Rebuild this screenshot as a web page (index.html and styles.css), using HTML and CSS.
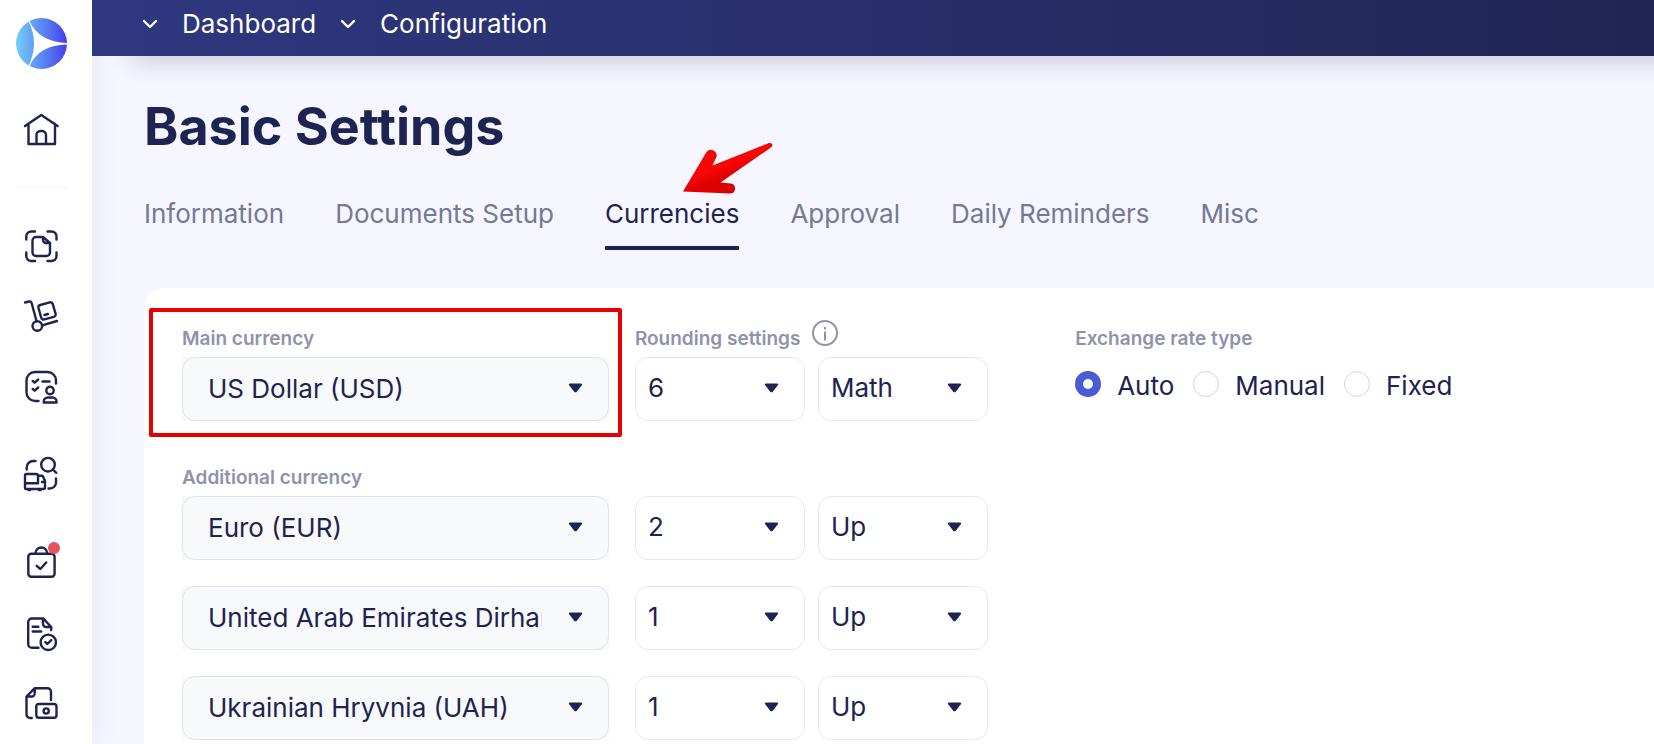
FILE: index.html
```html
<!DOCTYPE html>
<html lang="en">
<head>
    <meta charset="UTF-8">
    <meta name="viewport" content="width=device-width, initial-scale=1.0">
    <title>Basic Settings</title>
    <link rel="stylesheet" href="styles.css">
</head>
<body>
    <div class="app">
        <nav class="sidebar" aria-label="Main menu">
            <a href="#" class="logo" aria-label="Home page">
                <svg width="52" height="52" viewBox="0 0 52 52">
                    <defs>
                        <linearGradient id="logoFill" x1="0" y1="0" x2="1" y2="0">
                            <stop offset="0" stop-color="#77cdfa"/>
                            <stop offset="0.5" stop-color="#5b8af3"/>
                            <stop offset="1" stop-color="#453fea"/>
                        </linearGradient>
                    </defs>
                    <circle cx="26.5" cy="26.5" r="25.5" fill="url(#logoFill)"/>
                    <path d="M13 3L14.5 4Q24 25 52 26V27.500Q24 28 14.500 49L13 50Q25 26.500 13 3Z" fill="#fff"/>
                </svg>
            </a>
            <a href="#" class="nav-icon nav-home" aria-label="Home">
                <svg viewBox="0 0 36 36"><path d="M2 14L18.300 3 34.600 14M5.500 12V32H32V12M13.500 32V23a4 4 0 0 1 4-4h1.500a4 4 0 0 1 4 4v9"/></svg>
            </a>
            <div class="nav-group">
                <a href="#" class="nav-icon" aria-label="Documents">
                    <svg viewBox="0 0 36 36"><path d="M3.300 11.500V8.500a5 5 0 0 1 5-5H12M24.500 3.500h4a5 5 0 0 1 5 5v3M33.500 24.500v3.500a5 5 0 0 1-5 5h-4M12 33H8.300a5 5 0 0 1-5-5v-3.500"/><path d="M20 9h-7a3.500 3.500 0 0 0-3.500 3.500v12A3.500 3.500 0 0 0 13 28h10.500a3.500 3.500 0 0 0 3.500-3.500v-9.500zM20 9v3a3 3 0 0 0 3 3h4"/></svg>
                </a>
                <a href="#" class="nav-icon" aria-label="Supply">
                    <svg viewBox="0 0 36 36"><path d="M2 4.500l4-1q2-.5 2.600 1.500L13.500 23"/><circle cx="14.300" cy="28" r="4.800"/><path d="M19.300 27.300L34 23M17.300 7l9.400-2.600a2.500 2.500 0 0 1 3.100 1.800l2.800 9.600a2.500 2.500 0 0 1-1.800 3.100l-9.500 2.500a2.500 2.500 0 0 1-3.100-1.800L15.500 10a2.500 2.500 0 0 1 1.800-3zM21.500 17l3.500-1"/></svg>
                </a>
                <a href="#" class="nav-icon" aria-label="Approvals">
                    <svg viewBox="0 0 36 36"><path d="M15.500 33H12a8.500 8.500 0 0 1-8.500-8.500V12.500A8.500 8.500 0 0 1 12 4h12.500a8.500 8.500 0 0 1 8.500 8.500v3M9.700 13l2 1.700 3.500-3.200M9.700 21l2 1.700 3.500-3.200M19.500 13.500h7"/><circle cx="27" cy="22.500" r="3.700"/><path d="M20.800 34.500h12.700v-1a4 4 0 0 0-4-4h-4.700a4 4 0 0 0-4 4z"/></svg>
                </a>
            </div>
            <div class="nav-group">
                <a href="#" class="nav-icon" aria-label="Tracking">
                    <svg viewBox="0 0 36 36"><path d="M3.700 13.500v-2a6.500 6.500 0 0 1 6.500-6.500h2.300M33 22.500v4a6 6 0 0 1-6 6h-1.500"/><circle cx="25" cy="8.700" r="6.800"/><path d="M29.800 13.500l3.500 3.300"/><path d="M3.500 18H13a2 2 0 0 1 2 2v7.300H2V19.500A1.500 1.500 0 0 1 3.500 18zM2 27.300V32a1 1 0 0 0 1 1h17.500a1.500 1.500 0 0 0 1.500-1.500V25l-2-4.500a1.500 1.500 0 0 0-1.400-.8H15M19 26h2.500M5.500 34h1.500M16 34h1.500"/></svg>
                </a>
            </div>
            <div class="nav-group">
                <a href="#" class="nav-icon" aria-label="Orders">
                    <svg viewBox="0 0 36 36"><rect x="5.300" y="9.700" width="26.300" height="23" rx="3"/><path d="M12.500 9.500c.5-8 11.200-8 11.700 0M13.700 21.800l3.700 3.200 5.800-6.500"/></svg>
                    <span class="dot"></span>
                </a>
                <a href="#" class="nav-icon" aria-label="Contracts">
                    <svg viewBox="0 0 36 36"><path d="M15.500 33.700H9a3.800 3.800 0 0 1-3.800-3.800V8.300A3.800 3.800 0 0 1 9 4.500h11.300l7.900 8.500v3M20 4.500V10a3 3 0 0 0 3 3h5.200M9.700 12.700h5.600M9.700 17.500h8.500"/><circle cx="25.300" cy="28.300" r="7.700"/><path d="M22.300 28l2 2 4-3.800"/></svg>
                </a>
                <a href="#" class="nav-icon" aria-label="Payments">
                    <svg viewBox="0 0 36 36"><path d="M8.800 34H7a3.500 3.500 0 0 1-3.500-3.500V12.500l8-8.200H24.500a3.500 3.500 0 0 1 3.500 3.500V16M11.700 4.500v5a3 3 0 0 1-3 3H3.700"/><rect x="13.300" y="20" width="20.200" height="13.700" rx="2.500"/><circle cx="23.200" cy="27" r="2.600"/></svg>
                </a>
            </div>
        </nav>

        <div class="page">
            <header class="topbar">
                <svg class="chevron" viewBox="0 0 16 10"><path d="M2 2l6 6 6-6"/></svg>
                <a href="#">Dashboard</a>
                <svg class="chevron" viewBox="0 0 16 10"><path d="M2 2l6 6 6-6"/></svg>
                <a href="#">Configuration</a>
            </header>

            <main class="content">
                <h1>Basic Settings</h1>

                <nav class="tabs" aria-label="Settings sections">
                    <a href="#">Information</a>
                    <a href="#">Documents Setup</a>
                    <a href="#" class="active">Currencies
                        <svg class="arrow" width="92" height="52" viewBox="0 0 92 52" aria-hidden="true">
                            <defs>
                                <linearGradient id="arrowFill" x1="0.350" y1="0.350" x2="0.600" y2="0.700">
                                    <stop offset="0.300" stop-color="#fa0505"/>
                                    <stop offset="0.800" stop-color="#dc0000"/>
                                </linearGradient>
                            </defs>
                            <path d="M1 49.500L24.500 10Q27 6.500 31 8.200Q35.500 10.500 34.500 15L30.500 23.500L87 1Q90.500 .5 90.500 3.500L89 5.500L38.500 40.500L49 41.500Q53.500 42.500 53 47Q52.500 51.500 48 51.500Z" fill="url(#arrowFill)"/>
                        </svg>
                    </a>
                    <a href="#">Approval</a>
                    <a href="#">Daily Reminders</a>
                    <a href="#">Misc</a>
                </nav>

                <form class="card">
                    <div class="row">
                        <div class="field highlight">
                            <label for="mainCurrency">Main currency</label>
                            <div class="select-box">
                                <select id="mainCurrency"><option>US Dollar (USD)</option></select>
                            </div>
                        </div>
                        <div class="field">
                            <div class="label-line">
                                <label for="mainDigits">Rounding settings</label>
                                <svg class="info" viewBox="0 0 26 26"><circle cx="13" cy="13" r="12"/><path d="M13 11.500v9M13 7v2.500"/></svg>
                            </div>
                            <div class="pair">
                                <select id="mainDigits"><option>6</option></select>
                                <select aria-label="Rounding method"><option>Math</option></select>
                            </div>
                        </div>
                        <fieldset class="rate">
                            <legend>Exchange rate type</legend>
                            <div class="radios">
                                <label><input type="radio" name="rate" checked>Auto</label>
                                <label><input type="radio" name="rate">Manual</label>
                                <label><input type="radio" name="rate">Fixed</label>
                            </div>
                        </fieldset>
                    </div>

                    <div class="additional">
                        <div class="row">
                            <div class="field">
                                <label for="currency1">Additional currency</label>
                                <div class="select-box">
                                    <select id="currency1"><option>Euro (EUR)</option></select>
                                </div>
                            </div>
                            <div class="pair">
                                <select aria-label="Euro digits"><option>2</option></select>
                                <select aria-label="Euro rounding method"><option>Up</option></select>
                            </div>
                        </div>
                        <div class="row">
                            <div class="select-box">
                                <select aria-label="Second additional currency"><option>United Arab Emirates Dirham (AED)</option></select>
                            </div>
                            <div class="pair">
                                <select aria-label="Dirham digits"><option>1</option></select>
                                <select aria-label="Dirham rounding method"><option>Up</option></select>
                            </div>
                        </div>
                        <div class="row">
                            <div class="select-box">
                                <select aria-label="Third additional currency"><option>Ukrainian Hryvnia (UAH)</option></select>
                            </div>
                            <div class="pair">
                                <select aria-label="Hryvnia digits"><option>1</option></select>
                                <select aria-label="Hryvnia rounding method"><option>Up</option></select>
                            </div>
                        </div>
                    </div>
                </form>
            </main>
        </div>
    </div>
</body>
</html>
```

FILE: styles.css
```css
* {
    box-sizing: border-box;
}
body {
    margin: 0;
    background: #f5f6ff;
    color: #1e2351;
    font-family: Inter, "Liberation Sans", sans-serif;
    font-size: 26px;
    line-height: 32px;
}
a {
    color: inherit;
    text-decoration: none;
}
.app {
    display: flex;
    min-height: 100vh;
}

/* sidebar */
.sidebar {
    flex: 0 0 92px;
    display: flex;
    flex-direction: column;
    align-items: center;
    padding: 17px 10px 0 0;
    background: #fff;
    box-shadow: 0 0 32px rgba(30, 35, 40, 0.07);
}
.logo {
    display: block;
    height: 52px;
}
.nav-icon {
    display: block;
    position: relative;
    width: 36px;
    height: 36px;
}
.nav-icon svg {
    display: block;
    width: 36px;
    height: 36px;
    overflow: visible;
    fill: none;
    stroke: #1e2351;
    stroke-width: 2.4;
    stroke-linecap: round;
    stroke-linejoin: round;
}
.nav-home {
    width: 52px;
    height: 76px;
    margin: 43px 0 40px;
    padding: 0 8px;
    border-bottom: 1px solid #f3f3f6;
}
.nav-group {
    display: flex;
    flex-direction: column;
    gap: 34px;
    margin-bottom: 52px;
}
.nav-group:last-child {
    margin-bottom: 0;
}
.dot {
    position: absolute;
    top: -2px;
    right: -1px;
    width: 12px;
    height: 12px;
    border-radius: 50%;
    background: #e5545e;
}

/* header */
.page {
    flex: 1;
    min-width: 0;
    display: flex;
    flex-direction: column;
    overflow-x: clip;
}
.topbar {
    position: relative;
    display: flex;
    align-items: center;
    gap: 24px;
    height: 56px;
    padding: 0 50px 8px;
    background: linear-gradient(90deg, #2f387f, #212555);
    color: #fff;
}
.topbar::after {
    content: "";
    position: absolute;
    left: 40px;
    right: -40px;
    bottom: 0;
    height: 20px;
    box-shadow: 0 4px 24px rgba(30, 35, 60, 0.24);
    z-index: -1;
}
.chevron {
    width: 16px;
    height: 10px;
    fill: none;
    stroke: #fff;
    stroke-width: 2.4;
    stroke-linecap: round;
    stroke-linejoin: round;
}

/* content */
.content {
    flex: 1;
    display: flex;
    flex-direction: column;
    padding: 39px 0 0 52px;
}
h1 {
    margin: 0 0 39px;
    font-size: 52px;
    line-height: 64px;
    font-weight: 700;
}
.tabs {
    display: flex;
    gap: 51px;
    margin-bottom: 38px;
    color: #747994;
}
.tabs a {
    position: relative;
    padding-bottom: 16px;
    border-bottom: 4px solid transparent;
    white-space: nowrap;
}
.tabs .active {
    color: #1e2351;
    border-color: #1e2351;
}
.arrow {
    position: absolute;
    left: 77px;
    bottom: 52px;
}

/* settings card */
.card {
    flex: 1;
    padding: 39px 0 0 38px;
    border-radius: 20px 0 0 0;
    background: #fff;
}
.row {
    display: grid;
    grid-template-columns: 29% 24% 1fr;
    gap: 26px;
    align-items: end;
}
.field {
    position: relative;
    display: flex;
    flex-direction: column;
    gap: 6px;
    min-width: 0;
}
.field label,
.rate legend {
    color: #8f92ac;
    font-size: 19px;
    line-height: 24px;
    font-weight: 600;
}
.highlight::after {
    content: "";
    position: absolute;
    inset: -19px -13px -16px -33px;
    border: 4px solid #e60000;
    border-radius: 2px;
    pointer-events: none;
}
.label-line {
    display: flex;
    align-items: center;
    gap: 12px;
    height: 24px;
}
.info {
    width: 26px;
    height: 26px;
    margin-bottom: 12px;
    fill: none;
    stroke: #8f92ac;
    stroke-width: 2;
}
select {
    appearance: none;
    display: block;
    width: 100%;
    min-width: 0;
    height: 64px;
    padding: 0 26px 2px 12px;
    border: 1px solid #e8e8ec;
    border-radius: 13px;
    background: url("data:image/svg+xml,%3Csvg xmlns='http://www.w3.org/2000/svg' width='15' height='10'%3E%3Cpath d='M2 .5H13Q15 .5 13.800 2.300L8.800 8.700Q7.500 10 6.200 8.700L1.200 2.300Q0 .5 2 .5Z' fill='%231e2351'/%3E%3C/svg%3E") no-repeat right 25px top 25px;
    color: inherit;
    font: inherit;
}
.select-box {
    background: #f8f9fb;
}
.select-box select {
    padding: 0 66px 0 25px;
    border-color: #e1e2e9;
}
.pair {
    display: grid;
    grid-template-columns: 1fr 1fr;
    gap: 13px;
}
.rate {
    align-self: start;
    min-width: 0;
    margin: 0 0 0 61px;
    padding: 0;
    border: 0;
}
.rate legend {
    padding: 0;
}
.radios {
    display: flex;
    gap: 19px;
    padding-top: 19px;
}
.radios label {
    display: flex;
    align-items: center;
    gap: 16px;
}
.radios input {
    appearance: none;
    width: 26px;
    height: 26px;
    margin: 0 0 4px;
    border: 1px solid #d2d3df;
    border-radius: 50%;
    background: #fff;
}
.radios input:checked {
    border: 8px solid #4a5bd4;
}
.additional {
    display: grid;
    gap: 26px;
    margin-top: 45px;
}
```
